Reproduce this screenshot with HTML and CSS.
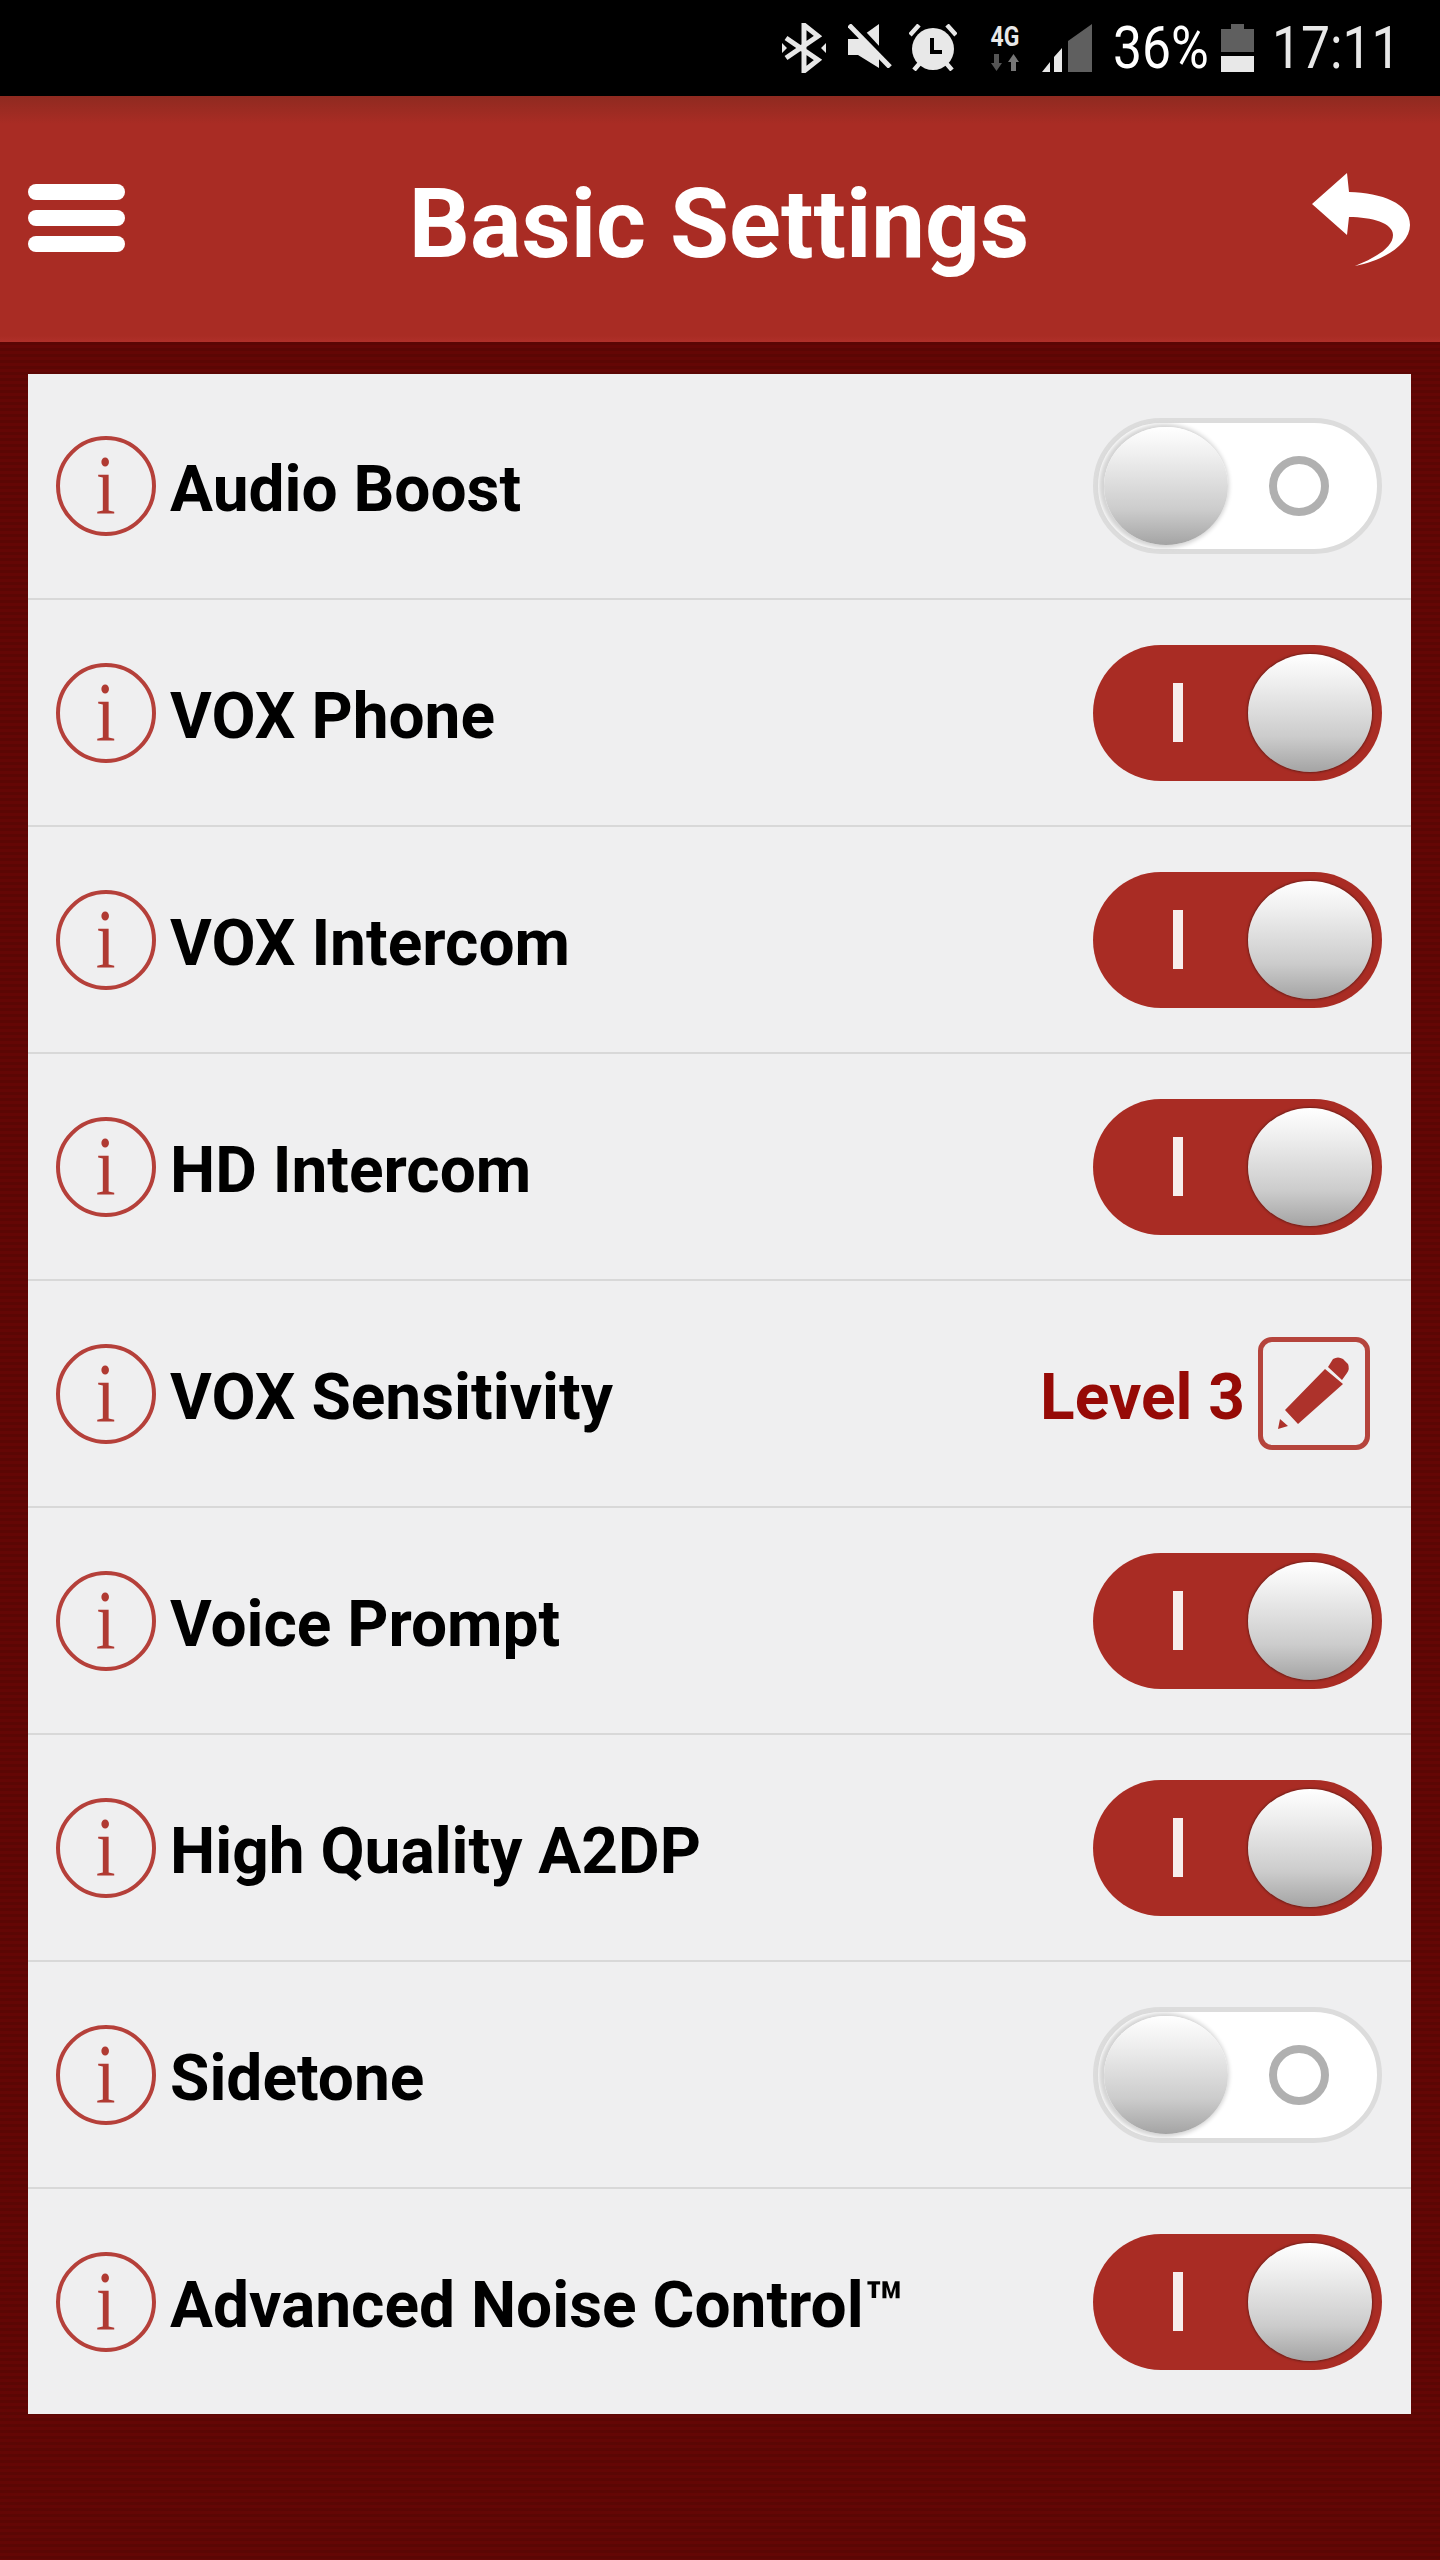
FILE: index.html
```html
<!DOCTYPE html>
<html lang="en">
<head>
    <meta charset="UTF-8">
    <meta name="viewport" content="width=device-width, initial-scale=1.0">
    <title>Basic Settings</title>
    <link rel="stylesheet" href="styles.css">
</head>
<body>
    <div class="status-bar">
        <svg class="st-bt" width="44" height="50" viewBox="0 0 44 50"><path d="M4 15 L36 37 L22 48 V2 L36 13 L4 35" fill="none" stroke="#e8e8e8" stroke-width="5"/><path d="M0 20 L5 25 L0 30Z M44 20 L39 25 L44 30Z" fill="#e8e8e8"/></svg>
        <svg class="st-mute" width="44" height="44" viewBox="0 0 44 44"><path d="M0 15 H10 L31 0 V44 L10 31 H0Z" fill="#e8e8e8"/><path d="M3 -3 L44 41" stroke="#000" stroke-width="7"/><path d="M1 1 L42 43" stroke="#e8e8e8" stroke-width="5"/></svg>
        <svg class="st-alarm" width="48" height="47" viewBox="0 0 48 47"><circle cx="24" cy="25" r="21" fill="#e8e8e8"/><path d="M1 11 L10 1 M47 11 L38 1 M5 46 L11 39 M43 46 L37 39" stroke="#e8e8e8" stroke-width="4.5"/><path d="M23 14 V28 H33" fill="none" stroke="#000" stroke-width="4"/></svg>
        <div class="st-net">
            <span class="st-4g">4G</span>
            <svg width="28" height="17" viewBox="0 0 28 17"><path d="M3 0 H8 V9 H11 L5.5 17 L0 9 H3Z" fill="#555"/><path d="M20 17 H25 V8 H28 L22.5 0 L17 8 H20Z" fill="#777"/></svg>
        </div>
        <svg class="st-signal" width="50" height="48" viewBox="0 0 50 48"><path d="M0 48 L8 38 V48Z M12 33 L20 24 V48 H12Z" fill="#e8e8e8"/><path d="M26 17 L50 0 V48 H26Z" fill="#5f5f5f"/></svg>
        <span class="st-pct">36%</span>
        <svg class="st-batt" width="33" height="48" viewBox="0 0 33 48"><path d="M10 0 H23 V5 H33 V28 H0 V5 H10Z" fill="#5f5f5f"/><rect y="32" width="33" height="16" fill="#e8e8e8"/></svg>
        <span class="st-time">17:11</span>
    </div>

    <div class="app-header">
        <div class="menu-icon"><span></span><span></span><span></span></div>
        <h1 class="page-title">Basic Settings</h1>
        <svg class="back-icon" width="98" height="93" viewBox="0 0 98 93"><path d="M0 31 L35 0 L37 19 C70 20 98 30 98 52 C98 72 70 88 43 93 C65 84 81 74 81 62 C81 50 60 44 37 44 L35 62 Z" fill="#fff"/></svg>
    </div>

    <div class="settings-list">
        <div class="row">
            <div class="info-icon"><span>i</span></div>
            <div class="label">Audio Boost</div>
            <div class="toggle off"><div class="knob"></div><div class="off-mark"></div></div>
        </div>
        <div class="row">
            <div class="info-icon"><span>i</span></div>
            <div class="label">VOX Phone</div>
            <div class="toggle on"><div class="on-mark"></div><div class="knob"></div></div>
        </div>
        <div class="row">
            <div class="info-icon"><span>i</span></div>
            <div class="label">VOX Intercom</div>
            <div class="toggle on"><div class="on-mark"></div><div class="knob"></div></div>
        </div>
        <div class="row">
            <div class="info-icon"><span>i</span></div>
            <div class="label">HD Intercom</div>
            <div class="toggle on"><div class="on-mark"></div><div class="knob"></div></div>
        </div>
        <div class="row row-level">
            <div class="info-icon"><span>i</span></div>
            <div class="label">VOX Sensitivity</div>
            <div class="level">Level 3</div>
            <div class="edit-button">
                <svg width="102" height="103" viewBox="0 0 102 103"><path d="M15 87 L17 77 L25 84Z M22 68 L62 27 L80 42 L35 82Z M65 25 L70 17 Q75 14 80 17 L85 22 Q87 27 84 31 L79 38Z" fill="#ad322b"/></svg>
            </div>
        </div>
        <div class="row">
            <div class="info-icon"><span>i</span></div>
            <div class="label">Voice Prompt</div>
            <div class="toggle on"><div class="on-mark"></div><div class="knob"></div></div>
        </div>
        <div class="row">
            <div class="info-icon"><span>i</span></div>
            <div class="label">High Quality A2DP</div>
            <div class="toggle on"><div class="on-mark"></div><div class="knob"></div></div>
        </div>
        <div class="row">
            <div class="info-icon"><span>i</span></div>
            <div class="label">Sidetone</div>
            <div class="toggle off"><div class="knob"></div><div class="off-mark"></div></div>
        </div>
        <div class="row">
            <div class="info-icon"><span>i</span></div>
            <div class="label">Advanced Noise Control™</div>
            <div class="toggle on"><div class="on-mark"></div><div class="knob"></div></div>
        </div>
    </div>
</body>
</html>
```

FILE: styles.css
```css
body {
    margin: 0;
    width: 1440px;
    height: 2560px;
    overflow: hidden;
    font-family: Roboto, "Liberation Sans", sans-serif;
    background-color: #5e0604;
    background-image: repeating-linear-gradient(#5b0604 0, #5b0604 3px, #640605 3px, #640605 6px);
}

.status-bar {
    display: flex;
    align-items: center;
    height: 96px;
    box-sizing: border-box;
    padding-left: 782px;
    background-color: #000;
    color: #fff;
}

.st-mute { margin-left: 22px; margin-top: -4px; }
.st-alarm { margin-left: 17px; margin-top: -2px; }

.st-net {
    display: flex;
    flex-direction: column;
    align-items: center;
    width: 38px;
    margin-left: 29px;
    gap: 5px;
}

.st-4g {
    font-size: 27px;
    line-height: 24px;
    font-weight: 700;
    color: #e8e8e8;
    transform: scaleX(0.85);
}

.st-signal { margin-left: 18px; }

.st-pct, .st-time {
    font-size: 60px;
    line-height: 60px;
    font-weight: 400;
    transform-origin: left center;
}

.st-pct {
    width: 95px;
    margin-left: 21px;
    transform: scaleX(0.86);
}

.st-batt { margin-left: 13px; }

.st-time {
    margin-left: 18px;
    color: #e8e8e8;
    transform: scaleX(0.86);
}

.app-header {
    display: grid;
    grid-template-columns: 1fr auto 1fr;
    align-items: center;
    height: 246px;
    box-sizing: border-box;
    padding: 0 30px 0 28px;
    background: linear-gradient(#8f2a20, #a92c24 28px, #a92c24 240px, #b0302a);
}

.menu-icon {
    display: flex;
    flex-direction: column;
    gap: 10px;
    width: 97px;
    margin-top: -3px;
}

.menu-icon span {
    height: 16px;
    border-radius: 8px;
    background-color: #fff;
}

.page-title {
    margin: 10px 0 0;
    font-size: 96px;
    line-height: 100px;
    font-weight: 700;
    color: #fff;
}

.back-icon {
    justify-self: end;
}

.settings-list {
    margin: 32px 29px 0 28px;
    background-color: #efeff0;
}

.row {
    display: flex;
    align-items: center;
    height: 227px;
    box-sizing: border-box;
    padding: 0 29px 0 28px;
    border-bottom: 2px solid #d8d8d8;
}

.row:first-child {
    height: 226px;
}

.row:last-child {
    height: 225px;
    border-bottom: none;
}

.row-level {
    padding-right: 41px;
}

.info-icon {
    display: flex;
    align-items: center;
    justify-content: center;
    flex: none;
    width: 100px;
    height: 100px;
    box-sizing: border-box;
    border: 4px solid #b5403a;
    border-radius: 50%;
    color: #b03a32;
    font-family: "Liberation Serif", serif;
    font-size: 84px;
    line-height: 92px;
}

.info-icon span {
    transform: scaleX(0.85);
}

.label {
    flex: 1;
    margin-left: 14px;
    padding-top: 7px;
    font-size: 64px;
    font-weight: 700;
    color: #000;
}

.level {
    margin-right: 13px;
    padding-top: 7px;
    font-size: 64px;
    font-weight: 700;
    color: #960a06;
}

.edit-button {
    display: flex;
    width: 112px;
    height: 113px;
    box-sizing: border-box;
    border: 5px solid #b5443c;
    border-radius: 14px;
}

.toggle {
    display: flex;
    align-items: center;
    justify-content: space-between;
    flex: none;
    width: 289px;
    height: 136px;
    box-sizing: border-box;
    border-radius: 68px;
}

.toggle.on {
    padding: 0 10px 0 80px;
    background-color: #a92c24;
}

.toggle.off {
    padding: 0 48px 0 6px;
    border: 5px solid #dcdcdc;
    background-color: #fff;
}

.knob {
    width: 124px;
    height: 118px;
    border-radius: 50%;
    background: linear-gradient(#fff, #eee 25%, #ccc 70%, #a4a4a4);
}

.on .knob {
    box-shadow: 0 0 2px 1px #70201a;
}

.off .knob {
    box-shadow: -2px 0 4px 3px #d4d4d4;
}

.on-mark {
    width: 10px;
    height: 59px;
    background-color: #f7eeed;
}

.off-mark {
    width: 60px;
    height: 60px;
    box-sizing: border-box;
    border: 8px solid #b0b0b0;
    border-radius: 50%;
}
```
